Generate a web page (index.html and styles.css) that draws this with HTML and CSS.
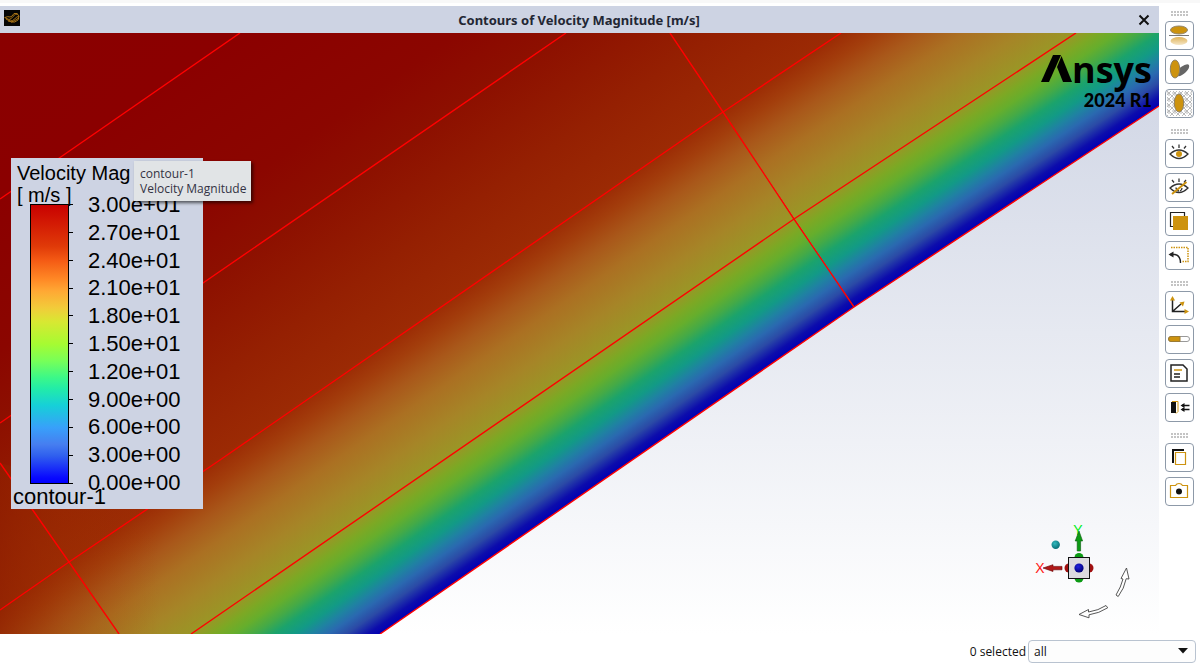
FILE: index.html
```html
<!DOCTYPE html>
<html lang="en">
<head>
<meta charset="utf-8">
<meta name="viewport" content="width=device-width, initial-scale=1">
<title>Contours of Velocity Magnitude</title>
<link rel="stylesheet" href="styles.css">
</head>
<body>
<div class="app">
  <main class="window">
    <header class="titlebar">
      <svg class="app-icon" viewBox="0 0 16 16" aria-hidden="true">
        <rect width="16" height="16" fill="#050505"/>
        <g fill="none" stroke="#b57c16" stroke-width="0.900">
          <path d="M0.500 7.500L5 9.500q2 0 4-3t5-2.500"/>
          <path d="M1 7.500q3-1.500 5-.5q2 0 4-3.500h3"/>
          <path d="M2 9q5 3.500 8 .5t5-3.500"/>
          <path d="M4 11q4 2 7-.5t4-2.500"/>
          <path d="M7 12q4 1 7-2l1-4l-2-2.500"/>
        </g>
      </svg>
      <h1 class="title">Contours of Velocity Magnitude [m/s]</h1>
      <button class="close" type="button" aria-label="Close">
        <svg viewBox="0 0 12 12" aria-hidden="true"><path d="M1.500 1.500l9 9M10.500 1.500l-9 9" stroke="#111" stroke-width="2"/></svg>
      </button>
    </header>

    <section class="viewport" aria-label="Contour plot">
      <svg class="plot" viewBox="0 33 1159 601" preserveAspectRatio="none" aria-hidden="true">
        <defs>
          <linearGradient id="field" gradientUnits="userSpaceOnUse" x1="445" y1="-285.500" x2="854" y2="307">
            <stop offset="0" stop-color="#8a0000"/>
            <stop offset="0.200" stop-color="#8b0000"/>
            <stop offset="0.375" stop-color="#8b0600"/>
            <stop offset="0.460" stop-color="#8d1000"/>
            <stop offset="0.580" stop-color="#952002"/>
            <stop offset="0.670" stop-color="#9b2a04"/>
            <stop offset="0.700" stop-color="#a33e0c"/>
            <stop offset="0.732" stop-color="#a9581a"/>
            <stop offset="0.766" stop-color="#ab7022"/>
            <stop offset="0.810" stop-color="#a68527"/>
            <stop offset="0.850" stop-color="#9a9626"/>
            <stop offset="0.868" stop-color="#7da824"/>
            <stop offset="0.884" stop-color="#66ae2c"/>
            <stop offset="0.900" stop-color="#45aa46"/>
            <stop offset="0.916" stop-color="#1ba36c"/>
            <stop offset="0.932" stop-color="#129a86"/>
            <stop offset="0.946" stop-color="#1f82a2"/>
            <stop offset="0.959" stop-color="#2a69b0"/>
            <stop offset="0.973" stop-color="#2b4aa6"/>
            <stop offset="0.990" stop-color="#0c0cac"/>
            <stop offset="1" stop-color="#0000b4"/>
          </linearGradient>
          <linearGradient id="fieldRight" href="#field" gradientUnits="userSpaceOnUse" x1="458" y1="-294" x2="854" y2="307"/>
          <linearGradient id="sky" x1="0" y1="0" x2="0" y2="1">
            <stop offset="0" stop-color="#cdd3e3"/>
            <stop offset="1" stop-color="#ffffff"/>
          </linearGradient>
          <linearGradient id="edge" x1="0" y1="0" x2="1" y2="0">
            <stop offset="0" stop-color="#8f2000" stop-opacity="0.600"/>
            <stop offset="0.400" stop-color="#9a3000" stop-opacity="0.300"/>
            <stop offset="1" stop-color="#a04000" stop-opacity="0"/>
          </linearGradient>
        </defs>
        <rect y="33" width="1159" height="601" fill="url(#sky)"/>
        <path d="M0 33H671L854 307L380 634H0z" fill="url(#field)"/>
        <path d="M670 33H1159V106L854 307z" fill="url(#fieldRight)"/>
        <path d="M0 463L160 509V634H0z" fill="url(#edge)"/>
        <g fill="none" stroke="#ff0000" stroke-width="1.400">
          <path d="M0 199L240 33"/>
          <path d="M0 423L203 283L566 33"/>
          <path d="M0 610L69 562L220 460L723 112L841 33"/>
          <path d="M191 634L794 219L1076 33"/>
          <path d="M380 634L854 307L1159 106"/>
          <path d="M670 33L723 112L794 219L854 307"/>
          <path d="M0 463L32 509L69 562L119 634"/>
        </g>
      </svg>

      <aside class="legend">
        <p class="legend-head">Velocity Mag</p>
        <p class="legend-head">[ m/s ]</p>
        <div class="scale">
          <svg class="colorbar" viewBox="0 0 43 281" aria-hidden="true">
            <defs>
              <linearGradient id="bar" x1="0" y1="0" x2="0" y2="1">
                <stop offset="0" stop-color="#c80000"/>
                <stop offset="0.150" stop-color="#e03a08"/>
                <stop offset="0.200" stop-color="#f45a14"/>
                <stop offset="0.270" stop-color="#ff8a26"/>
                <stop offset="0.310" stop-color="#ffa834"/>
                <stop offset="0.370" stop-color="#f2cb3a"/>
                <stop offset="0.420" stop-color="#d8e832"/>
                <stop offset="0.500" stop-color="#a6fb32"/>
                <stop offset="0.560" stop-color="#78ff58"/>
                <stop offset="0.620" stop-color="#3cf888"/>
                <stop offset="0.660" stop-color="#22eca8"/>
                <stop offset="0.720" stop-color="#16d0d8"/>
                <stop offset="0.800" stop-color="#38a0fa"/>
                <stop offset="0.860" stop-color="#467ef0"/>
                <stop offset="0.900" stop-color="#3060ee"/>
                <stop offset="0.980" stop-color="#0808ff"/>
                <stop offset="1" stop-color="#0000ff"/>
              </linearGradient>
            </defs>
            <rect x="0.500" y="0.500" width="38" height="279" fill="url(#bar)" stroke="#000"/>
            <path d="M38 .5h5M38 28.500h5M38 56.500h5M38 84.500h5M38 111.500h5M38 139.500h5M38 167.500h5M38 195.500h5M38 223.500h5M38 251.500h5M38 279.500h5" stroke="#000"/>
          </svg>
          <ol class="ticks">
            <li>3.00e+01</li>
            <li>2.70e+01</li>
            <li>2.40e+01</li>
            <li>2.10e+01</li>
            <li>1.80e+01</li>
            <li>1.50e+01</li>
            <li>1.20e+01</li>
            <li>9.00e+00</li>
            <li>6.00e+00</li>
            <li>3.00e+00</li>
            <li>0.00e+00</li>
          </ol>
        </div>
        <p class="legend-name">contour-1</p>
      </aside>

      <div class="tooltip" role="tooltip">contour-1<br>Velocity Magnitude</div>

      <div class="brand">
        <div class="brand-name">
          <svg class="brand-mark" viewBox="0 0 31 28" role="img" aria-label="A">
            <path d="M12 0h8L8 27H0z"/>
            <path d="M20.500 1l10.500 26h-9L16 12z"/>
          </svg><span>nsys</span>
        </div>
        <div class="brand-version">2024 R1</div>
      </div>

      <svg class="triad" viewBox="1030 520 110 105" role="img" aria-label="Axis triad">
        <defs>
          <radialGradient id="ball" cx="0.400" cy="0.350" r="0.650">
            <stop offset="0" stop-color="#32b9bd"/><stop offset="1" stop-color="#087078"/>
          </radialGradient>
          <radialGradient id="hub" cx="0.400" cy="0.350" r="0.650">
            <stop offset="0" stop-color="#2020e0"/><stop offset="1" stop-color="#000078"/>
          </radialGradient>
        </defs>
        <circle cx="1055.700" cy="544.700" r="4.200" fill="url(#ball)"/>
        <text class="axis axis-y" x="1078" y="535">Y</text>
        <text class="axis axis-x" x="1040" y="573">X</text>
        <path d="M1079 531l3.600 10h-2v10h-3.400v-10h-2z" fill="#0c9a14" stroke="#075a0c" stroke-width="0.600"/>
        <path d="M1043 568l10-3.300v1.700h9v3.400h-9v1.700z" fill="#b01818" stroke="#600" stroke-width="0.600"/>
        <circle cx="1079" cy="557.500" r="4.500" fill="#0c9a14"/>
        <circle cx="1079" cy="578" r="4.500" fill="#0c9a14"/>
        <circle cx="1069" cy="568" r="4.500" fill="#a01010"/>
        <circle cx="1089" cy="568" r="4.500" fill="#a01010"/>
        <rect x="1068.500" y="557.500" width="21" height="21" fill="#dcdadf" stroke="#111"/>
        <circle cx="1079" cy="568" r="4.600" fill="url(#hub)"/>
        <g fill="#fff" stroke="#444" stroke-width="0.900">
          <path d="M1116 595q5-8 7-16l-2-.5L1126.500 568l2.500 11-2.800-.3q-2 10-8 17.800z"/>
          <path d="M1079 614.500l9.500-5v2.500q10-1.500 17.500-6.500l1.700 2.300q-8.500 5.500-18.700 7v3z"/>
        </g>
      </svg>
    </section>

    <footer class="statusbar">
      <label for="selection">0 selected</label>
      <span class="select-wrap">
        <select id="selection" class="select"><option>all</option></select>
        <svg class="caret" viewBox="0 0 10 6" aria-hidden="true"><path d="M0 0h10L5 5.500z" fill="#111"/></svg>
      </span>
    </footer>
  </main>

  <nav class="toolbar" aria-label="Display tools">
    <div class="group">
      <span class="grip"></span>
      <button class="tool" type="button" aria-label="Reflections">
        <svg viewBox="0 0 27 27"><defs><linearGradient id="fade" x1="0" y1="0" x2="0" y2="1"><stop offset="0" stop-color="#dfb35a"/><stop offset="1" stop-color="#f5e6c6"/></linearGradient></defs><ellipse cx="13" cy="8" rx="8.500" ry="4" fill="#cd930f" stroke="#94866a"/><path d="M3 13.500h20" stroke="#777"/><ellipse cx="13" cy="19" rx="8.500" ry="4" fill="url(#fade)"/></svg>
      </button>
      <button class="tool" type="button" aria-label="Shadows">
        <svg viewBox="0 0 27 27"><path d="M11 20q-1-6 4-9q6-4 8-2q1 3-3 7q-5 5-9 4z" fill="#666"/><ellipse cx="9" cy="13" rx="4.700" ry="9" fill="#cd930f" stroke="#8e8164"/></svg>
      </button>
      <button class="tool" type="button" aria-label="Ground grid">
        <svg viewBox="0 0 27 27"><defs><pattern id="mesh" width="6" height="6" patternUnits="userSpaceOnUse"><path d="M0 0l6 6M6 0l-6 6M0 3h2M3 6v-2" stroke="#bbb" stroke-width="1"/></pattern></defs><rect x="1" y="1" width="25" height="25" fill="url(#mesh)"/><ellipse cx="13" cy="13" rx="4.700" ry="9" fill="#cd930f" stroke="#8e8164"/></svg>
      </button>
    </div>
    <div class="group">
      <span class="grip"></span>
      <button class="tool" type="button" aria-label="Show">
        <svg viewBox="0 0 27 27"><g fill="none" stroke="#333" stroke-width="1.300"><path d="M4 14q9-8 18 0q-9 9-18 0z"/><path d="M13 4.500v3.500M6 6l2 2.500M20 6l-2 2.500"/></g><circle cx="13" cy="14" r="3" fill="#cd930f"/></svg>
      </button>
      <button class="tool" type="button" aria-label="Hide">
        <svg viewBox="0 0 27 27"><g fill="none" stroke="#333" stroke-width="1.300"><path d="M4 14q9-8 18 0q-9 9-18 0z"/><path d="M10 13.500q0 3 3 3.500M16 14q0 2-2 3"/><path d="M13 4.500v3.500M6 6l2 2.500M20 6l-2 2.500"/></g><path d="M6 20L20.500 8" stroke="#cd930f" stroke-width="2"/></svg>
      </button>
      <button class="tool" type="button" aria-label="Solid view">
        <svg viewBox="0 0 27 27"><path d="M4.500 4.500h14v14h-14z" fill="#fff" stroke="#222" stroke-width="1.200"/><path d="M7 8h15v14H7z" fill="#cd930f"/></svg>
      </button>
      <button class="tool" type="button" aria-label="Undo view">
        <svg viewBox="0 0 27 27"><path d="M5 5.500h17v14h-6" fill="none" stroke="#cd930f" stroke-width="1.500" stroke-dasharray="1.500 1"/><path d="M4 12.500h5q5.500 1 5.500 8.500" fill="none" stroke="#222" stroke-width="1.400"/><path d="M2.500 12.500l5-3v6z" fill="#222"/></svg>
      </button>
    </div>
    <div class="group">
      <span class="grip"></span>
      <button class="tool" type="button" aria-label="Axes">
        <svg viewBox="0 0 27 27"><path d="M6.500 7v12.500H20M6.500 19.500L15 12" fill="none" stroke="#222" stroke-width="1.500"/><g fill="#cd930f"><path d="M6.500 4l2.500 4.500H4z"/><path d="M23 19.500L18.500 17v5z"/><path d="M18.500 9.500l-5 1 3.500 4z"/></g></svg>
      </button>
      <button class="tool" type="button" aria-label="Ruler">
        <svg viewBox="0 0 27 27"><rect x="2.500" y="10.500" width="21" height="5" rx="2.500" fill="#fff" stroke="#999"/><path d="M5 10.500h9v5H5q-2.500 0-2.500-2.500T5 10.500z" fill="#cd930f" stroke="#9a7b36"/></svg>
      </button>
      <button class="tool" type="button" aria-label="Titles">
        <svg viewBox="0 0 27 27"><path d="M5 5h12l4 4v12H5z" fill="none" stroke="#222" stroke-width="1.500"/><path d="M8 10h8" stroke="#cd930f" stroke-width="1.500"/><path d="M8 14h6M8 17h6" stroke="#222" stroke-width="1.400"/></svg>
      </button>
      <button class="tool" type="button" aria-label="Collapse panel">
        <svg viewBox="0 0 27 27"><path d="M5 8h5v11H5z" fill="#111"/><path d="M6 7.500h6v10l-2 2" fill="none" stroke="#cd930f"/><path d="M16 11.500h7.500M16 15.500h7.500" stroke="#111" stroke-width="1.500"/><path d="M14.500 11.500l4-2.500v5zM14.500 15.500l4-2.500v5z" fill="#111"/></svg>
      </button>
    </div>
    <div class="group">
      <span class="grip"></span>
      <button class="tool" type="button" aria-label="Copy">
        <svg viewBox="0 0 27 27"><path d="M18 6H7v13" fill="none" stroke="#111" stroke-width="2"/><path d="M9.500 8.500h10v12h-10z" fill="#fff" stroke="#cd930f" stroke-width="1.200"/></svg>
      </button>
      <button class="tool" type="button" aria-label="Save picture">
        <svg viewBox="0 0 27 27"><path d="M4.500 7.500h5q1-2 3.500-2t3.500 2h5v12h-17z" fill="#fff" stroke="#cd930f" stroke-width="1.200"/><circle cx="13" cy="13.500" r="3" fill="#111"/></svg>
      </button>
    </div>
  </nav>
</div>
</body>
</html>
```
FILE: styles.css
```css
* { box-sizing: border-box; }

body {
  margin: 0;
  background: #ffffff;
  color: #111;
  font: 12px/15px "Open Sans", "Noto Sans", sans-serif;
}

p, h1, ol { margin: 0; padding: 0; }
svg { display: block; }

.app {
  display: flex;
  min-height: 100vh;
  border-top: 3px solid #f8f8f8;
}

.window {
  flex: 1;
  display: flex;
  flex-direction: column;
  min-width: 0;
  padding-top: 3px;
}

.titlebar {
  display: flex;
  align-items: center;
  height: 27px;
  padding: 0 9px 0 4px;
  background: #cdd3e3;
}

.app-icon { width: 16px; height: 16px; margin-bottom: 3px; }

.title {
  flex: 1;
  text-align: center;
  font: 700 13px/16px "Noto Sans", "Open Sans", sans-serif;
  color: #222633;
}

.close {
  width: 12px;
  height: 12px;
  padding: 0;
  border: 0;
  background: none;
}

.viewport {
  position: relative;
  flex: 1;
  overflow: hidden;
}

.plot {
  position: absolute;
  width: 100%;
  height: 100%;
}

.legend {
  position: absolute;
  left: 11px;
  top: 125px;
  width: 192px;
  padding-top: 4px;
  background: #cdd3e3;
  font-family: "Liberation Sans", Arial, sans-serif;
  font-size: 22px;
  color: #000;
}

.legend-head {
  padding-left: 6px;
  font-size: 20px;
  line-height: 22px;
}

.scale {
  display: flex;
  gap: 15px;
  height: 281px;
  margin-top: -2px;
  padding-left: 19px;
}

.colorbar { width: 43px; height: 281px; }

.ticks {
  display: flex;
  flex-direction: column;
  justify-content: space-between;
  height: 304px;
  margin-top: -12px;
  line-height: 26px;
  list-style: none;
}

.legend-name { padding-left: 2px; line-height: 24px; }

.tooltip {
  position: absolute;
  left: 134px;
  top: 128px;
  padding: 5px;
  padding-left: 6px;
  background: #e1e4e6;
  box-shadow: 2px 2px 3px rgba(0, 0, 0, 0.6);
  color: #333344;
}

.brand {
  position: absolute;
  right: 7px;
  top: 22px;
  color: #000;
  text-align: right;
}

.brand-name {
  display: flex;
  align-items: flex-start;
  font: 700 36px/30px "Open Sans", "Noto Sans", sans-serif;
}

.brand-mark { width: 31px; height: 28px; }

.brand-version { padding-top: 6px; font: 900 18px/18px Lato, sans-serif; }

.triad {
  position: absolute;
  right: 19px;
  bottom: 9px;
  width: 110px;
  height: 105px;
}

.axis {
  font: 14px "Liberation Sans", Arial, sans-serif;
  text-anchor: middle;
}

.axis-x { fill: #ff1818; }
.axis-y { fill: #00ee20; }

.statusbar {
  display: flex;
  justify-content: flex-end;
  align-items: center;
  gap: 2px;
  height: 31px;
  margin-right: -37px;
  padding-top: 4px;
}

.select-wrap { position: relative; }

.select {
  display: block;
  width: 168px;
  height: 23px;
  padding: 0 5px;
  border: 1px solid #b9c3d0;
  border-radius: 4px;
  background: #fdfdfd;
  color: #111;
  font: inherit;
  appearance: none;
}

.caret {
  position: absolute;
  right: 8px;
  top: 8px;
  width: 10px;
  height: 6px;
  pointer-events: none;
}

.toolbar {
  display: flex;
  flex-direction: column;
  gap: 11px;
  width: 41px;
  padding: 8px 6px 0;
}

.group {
  display: flex;
  flex-direction: column;
  gap: 5px;
}

.grip {
  align-self: center;
  width: 17px;
  height: 5px;
  background: radial-gradient(circle at 1px 1px, #c4c4c4 0 1px, transparent 1px) 0 0 / 3px 3px;
}

.tool {
  width: 29px;
  height: 29px;
  padding: 0;
  border: 1px solid #8d99a8;
  border-radius: 4px;
  background: #fff;
}
```
